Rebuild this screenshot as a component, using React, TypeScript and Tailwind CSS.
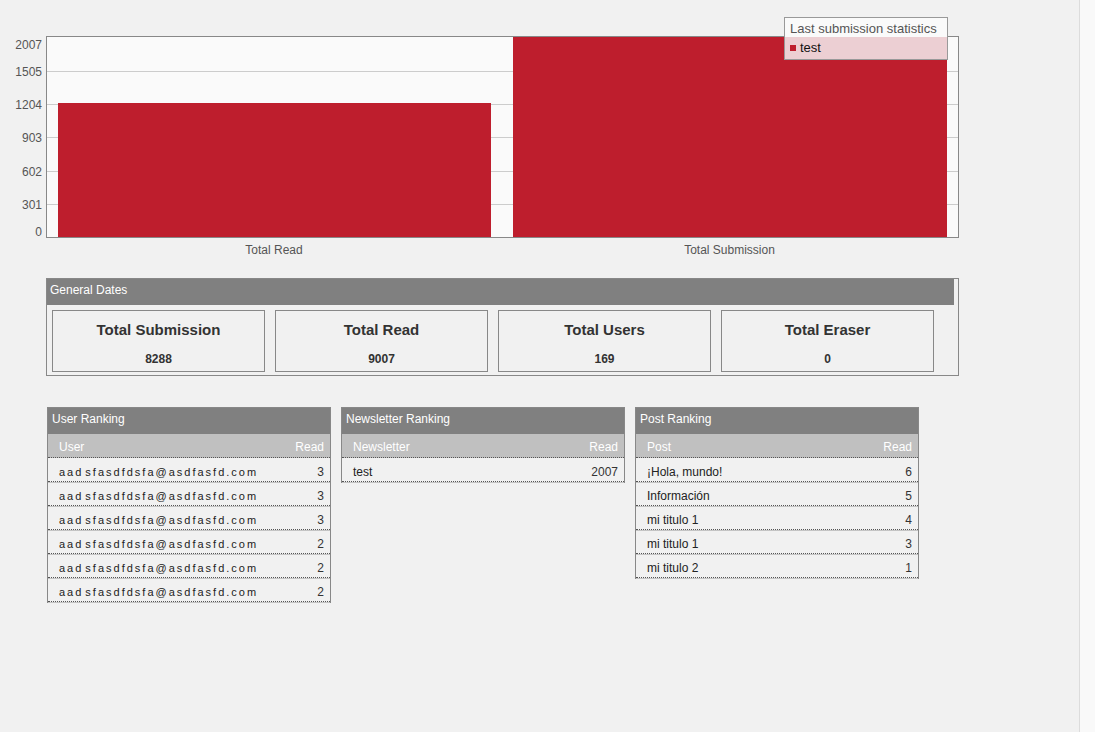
import React from "react";

const RED = "#be1e2d";

function Chart() {
  const grid = [71, 104, 137, 171, 204];
  const labels: [string, number][] = [
    ["2007", 45.5],
    ["1505", 72.5],
    ["1204", 105.5],
    ["903", 138.5],
    ["602", 172.5],
    ["301", 205.5],
    ["0", 232.5],
  ];
  return (
    <div className="relative h-[260px] w-[960px]">
      <svg width="960" height="260" className="block" style={{ fontFamily: "'Liberation Sans', Arial, sans-serif" }}>
        <rect x="46.5" y="36.5" width="912" height="201" fill="#fafafa" stroke="#888" />
        {grid.map((y) => (
          <line key={y} x1="47" x2="958" y1={y + 0.5} y2={y + 0.5} stroke="#cccccc" />
        ))}
        <rect x="58" y="103" width="433" height="134" fill={RED} />
        <rect x="513" y="37" width="434" height="200" fill={RED} />
        <line x1="46" x2="959" y1="237.5" y2="237.5" stroke="#888" />
        {labels.map(([t, y]) => (
          <text key={t} x="42" y={y} fontSize="12" fill="#555" textAnchor="end" dominantBaseline="middle">
            {t}
          </text>
        ))}
        <text x="274" y="251" fontSize="12" fill="#555" textAnchor="middle" dominantBaseline="middle">
          Total Read
        </text>
        <text x="729.5" y="251" fontSize="12" fill="#555" textAnchor="middle" dominantBaseline="middle">
          Total Submission
        </text>
      </svg>
      <div className="absolute left-[784px] top-[17px] w-[164px] border border-[#999] bg-[#fafafa]">
        <div className="h-[19px] pl-[5px] pt-[3px] text-[13px] leading-[16px] text-[#555] whitespace-nowrap">
          Last submission statistics
        </div>
        <div className="flex h-[22px] items-center bg-[#eccfd3]">
          <div className="ml-[5px] h-[6px] w-[6px] bg-[#be1e2d]" />
          <span className="ml-[4px] text-[13px] text-[#111]">test</span>
        </div>
      </div>
    </div>
  );
}

function StatCard({ title, value }: { title: string; value: string }) {
  return (
    <div className="flex h-[62px] w-[213px] flex-col items-center border border-[#888] pt-[10px]">
      <div className="text-[15px] font-bold leading-[18px] text-[#333]">{title}</div>
      <div className="mt-[13px] text-[12px] font-bold leading-[14px] text-[#333]">{value}</div>
    </div>
  );
}

type Row = { name: string; read: string };

function Email() {
  return (
    <span className="text-[11px] tracking-[2px] text-[#222]">
      <span className="mr-[2px]">aad</span>sfasdfdsfa@asdfasfd.com
    </span>
  );
}

function Ranking({
  title,
  col,
  rows,
  email,
}: {
  title: string;
  col: string;
  rows: Row[];
  email?: boolean;
}) {
  return (
    <div className="w-[284px] border border-[#888]">
      <div className="flex h-[26px] items-center bg-[#808080] pb-[4px] pl-[4px] text-[12px] text-white">{title}</div>
      <div className="flex h-[24px] items-center justify-between border-b border-dotted border-[#555] bg-[#c0c0c0] pl-[11px] pr-[6px] pt-[3px] text-[12px] text-white">
        <span>{col}</span>
        <span>Read</span>
      </div>
      {rows.map((r, i) => (
        <div
          key={i}
          className="flex h-[24px] items-center justify-between border-b border-dotted border-[#555] pl-[11px] pr-[6px] pt-[5px] text-[#333] shadow-[0_1px_0_#c4c4c4]"
        >
          {email ? <Email /> : <span className="text-[12px] text-[#222]">{r.name}</span>}
          <span className="text-[12px]">{r.read}</span>
        </div>
      ))}
    </div>
  );
}

export default function App() {
  const email = "aadsfasdfdsfa@asdfasfd.com";
  const users: Row[] = [
    { name: email, read: "3" },
    { name: email, read: "3" },
    { name: email, read: "3" },
    { name: email, read: "2" },
    { name: email, read: "2" },
    { name: email, read: "2" },
  ];
  const posts: Row[] = [
    { name: "¡Hola, mundo!", read: "6" },
    { name: "Información", read: "5" },
    { name: "mi titulo 1", read: "4" },
    { name: "mi titulo 1", read: "3" },
    { name: "mi titulo 2", read: "1" },
  ];
  return (
    <div className="flex h-[732px] w-[1095px] overflow-hidden bg-[#f1f1f1] font-['Liberation_Sans',Arial,sans-serif]">
      <div className="min-w-0 flex-1">
        <Chart />
        <div className="ml-[46px] mt-[18px] w-[913px] border border-[#888]">
          <div className="mr-[4px] flex h-[26px] items-center bg-[#808080] pb-[4px] pl-[3px] text-[12px] text-white">
            General Dates
          </div>
          <div className="ml-[5px] mt-[5px] mb-[3px] flex gap-[10px]">
            <StatCard title="Total Submission" value="8288" />
            <StatCard title="Total Read" value="9007" />
            <StatCard title="Total Users" value="169" />
            <StatCard title="Total Eraser" value="0" />
          </div>
        </div>
        <div className="ml-[47px] mt-[31px] flex items-start gap-[10px]">
          <Ranking title="User Ranking" col="User" rows={users} email />
          <Ranking title="Newsletter Ranking" col="Newsletter" rows={[{ name: "test", read: "2007" }]} />
          <Ranking title="Post Ranking" col="Post" rows={posts} />
        </div>
      </div>
      <div className="w-[16px] border-l border-[#dcdcdc] bg-[#f9f9f9]" />
    </div>
  );
}
